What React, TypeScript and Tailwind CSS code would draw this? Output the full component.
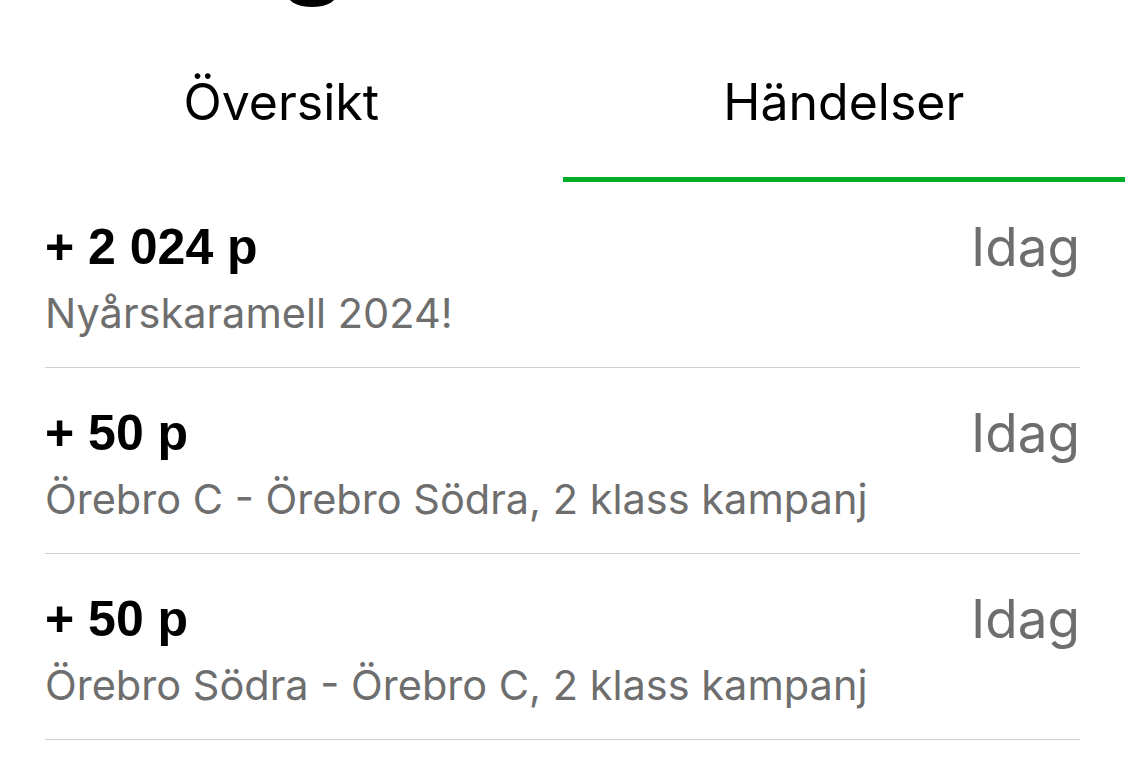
import React from "react";

const rows = [
  { pts: "+ 2 024 p", desc: "Nyårskaramell 2024!" },
  { pts: "+ 50 p", desc: "Örebro C - Örebro Södra, 2 klass kampanj" },
  { pts: "+ 50 p", desc: "Örebro Södra - Örebro C, 2 klass kampanj" },
];

export default function App() {
  return (
    <div className="w-[1125px] h-[774px] bg-white overflow-hidden" style={{ fontFamily: "Inter, 'Noto Sans', sans-serif" }}>
      <div className="h-[8px] overflow-hidden">
        <div className="ml-[289px] -mt-[13px] w-[46px] h-[20px] rounded-[50%] bg-black" />
      </div>
      <div className="flex h-[174px]">
        <div className="flex-1 flex flex-col">
          <div className="flex-1 flex items-center justify-center pt-[20px] text-[50px] text-black">Översikt</div>
          <div className="h-[5px]" />
        </div>
        <div className="flex-1 flex flex-col">
          <div className="flex-1 flex items-center justify-center pt-[20px] text-[50px] text-black">Händelser</div>
          <div className="h-[5px] bg-[#00ab26]" />
        </div>
      </div>
      <div className="px-[45px]">
        {rows.map((r, i) => (
          <div key={i} className="border-b border-[#d2d2d2] pt-[35px] pb-[24px]">
            <div className="flex items-start justify-between">
              <div className="text-[50px] leading-[60px] font-bold text-black" style={{ fontFamily: "'Liberation Sans', Arial, sans-serif" }}>{r.pts}</div>
              <div className="text-[53px] leading-[60px] text-[#6e6e6e]">Idag</div>
            </div>
            <div className="mt-[6px] text-[41.5px] leading-[60px] text-[#6e6e6e]">{r.desc}</div>
          </div>
        ))}
      </div>
    </div>
  );
}
